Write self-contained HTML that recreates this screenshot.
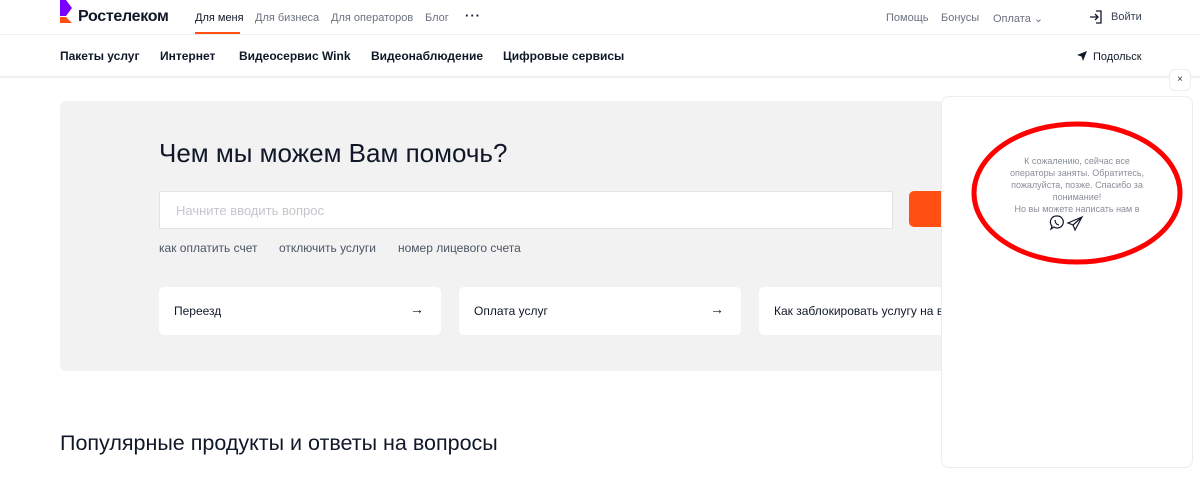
<!DOCTYPE html>
<html><head><meta charset="utf-8"><style>
*{margin:0;padding:0;box-sizing:border-box}
body{width:1200px;height:482px;overflow:hidden;background:#fff;font-family:"Liberation Sans",sans-serif;color:#101828;position:relative}
.a{position:absolute;white-space:nowrap}
</style></head><body>
<svg class="a" style="left:60px;top:0" width="14" height="24" viewBox="0 0 14 24"><path d="M0 0 L6 0 L12 8 L6 16 L0 16 Z" fill="#7700ff"/><path d="M0 17 L6 17 L12 23 L0 23 Z" fill="#ff4f12"/></svg>
<div class="a" style="left:78px;top:8px;font-size:16px;font-weight:bold;letter-spacing:-0.3px">Ростелеком</div>
<div class="a" style="left:195px;top:12px;font-size:11px;color:#101828">Для меня</div>
<div class="a" style="left:195px;top:32px;width:45px;height:2px;background:#ff4f12"></div>
<div class="a" style="left:255px;top:12px;font-size:11px;color:#6b7280">Для бизнеса</div>
<div class="a" style="left:331px;top:12px;font-size:11px;color:#6b7280">Для операторов</div>
<div class="a" style="left:425px;top:12px;font-size:11px;color:#6b7280">Блог</div>
<div class="a" style="left:465px;top:8px;font-size:13px;font-weight:bold;letter-spacing:1px">···</div>
<div class="a" style="left:886px;top:12px;font-size:11px;color:#6b7280">Помощь</div>
<div class="a" style="left:941px;top:12px;font-size:11px;color:#6b7280">Бонусы</div>
<div class="a" style="left:993px;top:12px;font-size:11px;color:#6b7280">Оплата ⌄</div>
<svg class="a" style="left:1089px;top:10px" width="14" height="14" viewBox="0 0 14 14" fill="none" stroke="#101828" stroke-width="1.3"><path d="M7 1h5v12H7M1 7h8M6 4l3 3-3 3"/></svg>
<div class="a" style="left:1111px;top:11px;font-size:11px;color:#374151">Войти</div>
<div class="a" style="left:0;top:34px;width:1200px;height:1px;background:#eceef0"></div>
<div class="a" style="left:60px;top:49px;font-size:12px;font-weight:bold">Пакеты услуг</div>
<div class="a" style="left:160px;top:49px;font-size:12px;font-weight:bold">Интернет</div>
<div class="a" style="left:239px;top:49px;font-size:12px;font-weight:bold">Видеосервис Wink</div>
<div class="a" style="left:371px;top:49px;font-size:12px;font-weight:bold">Видеонаблюдение</div>
<div class="a" style="left:503px;top:49px;font-size:12px;font-weight:bold">Цифровые сервисы</div>
<svg class="a" style="left:1077px;top:51px" width="10" height="10" viewBox="0 0 10 10"><path d="M10 0 L0 4 L4.5 5.5 L6 10 Z" fill="#101828"/></svg>
<div class="a" style="left:1093px;top:51px;font-size:11px">Подольск</div>
<div class="a" style="left:0;top:76px;width:1200px;height:3px;background:linear-gradient(#e8eaed,#fff)"></div>
<div class="a" style="left:60px;top:101px;width:900px;height:270px;background:#f2f2f2;border-radius:6px"></div>
<div class="a" style="left:159px;top:138px;font-size:26px;color:#101828">Чем мы можем Вам помочь?</div>
<div class="a" style="left:159px;top:191px;width:734px;height:38px;background:#fff;border:1px solid #e4e4e4"></div>
<div class="a" style="left:176px;top:203px;font-size:13px;color:#c4c6cc">Начните вводить вопрос</div>
<div class="a" style="left:909px;top:191px;width:60px;height:36px;background:#ff4f12;border-radius:5px"></div>
<div class="a" style="left:159px;top:241px;font-size:12px;color:#4b5563">как оплатить счет</div>
<div class="a" style="left:279px;top:241px;font-size:12px;color:#4b5563">отключить услуги</div>
<div class="a" style="left:398px;top:241px;font-size:12px;color:#4b5563">номер лицевого счета</div>
<div class="a" style="left:159px;top:287px;width:282px;height:48px;background:#fff;border-radius:5px"></div>
<div class="a" style="left:174px;top:304px;font-size:12px">Переезд</div>
<div class="a" style="left:410px;top:301px;font-size:14px">→</div>
<div class="a" style="left:459px;top:287px;width:282px;height:48px;background:#fff;border-radius:5px"></div>
<div class="a" style="left:474px;top:304px;font-size:12px">Оплата услуг</div>
<div class="a" style="left:710px;top:301px;font-size:14px">→</div>
<div class="a" style="left:759px;top:287px;width:200px;height:48px;background:#fff;border-radius:5px"></div>
<div class="a" style="left:774px;top:304px;font-size:12px">Как заблокировать услугу на в</div>
<div class="a" style="left:60px;top:431px;font-size:21.5px;color:#101828">Популярные продукты и ответы на вопросы</div>
<div class="a" style="left:941px;top:96px;width:252px;height:372px;background:#fff;border:1px solid #ececec;border-radius:8px"></div>
<div class="a" style="left:1169px;top:69px;width:22px;height:22px;background:#fff;border:1px solid #eee;border-radius:6px;font-size:10px;text-align:center;line-height:20px;color:#333">×</div>
<div class="a" style="left:967px;top:155px;width:220px;text-align:center;font-size:9px;line-height:12px;color:#8a8f98;white-space:normal">К сожалению, сейчас все<br>операторы заняты. Обратитесь,<br>пожалуйста, позже. Спасибо за<br>понимание!<br>Но вы можете написать нам в</div>
<svg class="a" style="left:1049px;top:214px" width="36" height="18" viewBox="0 0 36 18" fill="none" stroke="#101828" stroke-width="1.2"><path d="M8 2a6 6 0 1 1-3 11l-3 2 1-3A6 6 0 0 1 8 2z"/><path d="M6 6c0 3 2 5 4 5"/><path d="M33 3L19 9l5 2 2 5z M24 11l9-8"/></svg>
<svg class="a" style="left:0;top:0" width="1200" height="482"><ellipse cx="1077" cy="193" rx="103" ry="69" fill="none" stroke="#ff0000" stroke-width="5"/></svg>
</body></html>
